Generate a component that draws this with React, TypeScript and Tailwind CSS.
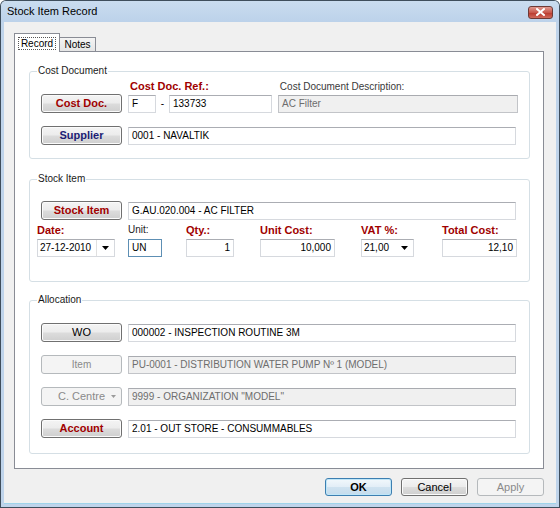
import React from "react";

const RED = "text-[#a00000]";

function Btn({
  children,
  className = "",
  disabled = false,
}: {
  children: React.ReactNode;
  className?: string;
  disabled?: boolean;
}) {
  const base =
    "h-[19px] w-[81px] shrink-0 rounded-[3px] border flex items-center justify-center leading-none";
  const look = disabled
    ? "border-[#b5b9bc] bg-[#f4f4f4] text-[#8a8a8a]"
    : "border-[#707070] bg-[linear-gradient(#f4f4f4,#ececec_48%,#dcdcdc_52%,#cfcfcf)] shadow-[inset_0_0_0_1px_#fbfbfb]";
  return <div className={`${base} ${look} ${className}`}>{children}</div>;
}

function Field({
  children,
  className = "",
  disabled = false,
  right = false,
}: {
  children?: React.ReactNode;
  className?: string;
  disabled?: boolean;
  right?: boolean;
}) {
  const look = disabled
    ? "bg-[#f0f0f0] border-[#c2c4c8] border-t-[#a9abb0] text-[#6d6d6d]"
    : "bg-white border-[#d6d9de] border-t-[#abadb3] text-black";
  return (
    <div
      className={`h-[18px] shrink-0 border flex items-center px-[3px] text-[10px] leading-none whitespace-nowrap overflow-hidden ${
        right ? "justify-end" : ""
      } ${look} ${className}`}
    >
      {children}
    </div>
  );
}

function Arrow({ color = "#000" }: { color?: string }) {
  return (
    <svg width="7" height="4" viewBox="0 0 7 4">
      <path d="M0 0h7L3.5 4z" fill={color} />
    </svg>
  );
}

function Group({
  title,
  className,
  children,
}: {
  title: string;
  className: string;
  children: React.ReactNode;
}) {
  return (
    <div
      className={`relative w-[501px] ml-[14px] rounded-[3px] border border-[#d5dfe5] ${className}`}
    >
      <span className="absolute left-[7px] top-[-7px] bg-white px-[1px] text-[10px] leading-[12px] text-[#1a1a1a]">
        {title}
      </span>
      {children}
    </div>
  );
}

export default function App() {
  return (
    <div className="w-[560px] h-[508px] bg-[#3f4e5c] p-px rounded-t-[6px] font-['Liberation_Sans',Arial,sans-serif] text-black select-none">
      <div className="h-full flex flex-col rounded-t-[5px] bg-[#bfd4eb]">
        {/* Title bar */}
        <div className="h-[21px] shrink-0 flex items-center justify-between pl-[6px] pr-[6px] bg-[linear-gradient(#cadcef,#bcd2ea)] rounded-t-[5px]">
          <span className="text-[11px] leading-none text-black">Stock Item Record</span>
          <div className="w-[25px] h-[13px] mt-[1px] rounded-[3px] border border-[#6e3a36] bg-[linear-gradient(#e09a90,#c8574b_50%,#b9382c_52%,#d06a5c)] flex items-center justify-center">
            <svg width="9" height="8" viewBox="0 0 9 8">
              <path d="M1 1l7 6M8 1L1 7" stroke="#fff" strokeWidth="2" strokeLinecap="square" />
            </svg>
          </div>
        </div>

        {/* Body */}
        <div className="flex-1 mx-[3px] mb-[3px] bg-[#f0f0f0] border-b border-[#9fd3ea] pt-[10px] pl-[10px] flex flex-col">
          {/* Tabs */}
          <div className="flex items-end h-[19px]">
            <div className="relative z-10 h-[19px] -mb-px w-[46px] border border-b-0 border-[#898c95] bg-white flex items-center justify-center">
              <span className="border border-dotted border-[#555] px-[2px] text-[10px] leading-[11px]">
                Record
              </span>
            </div>
            <div className="h-[15px] w-[36px] -mb-px border border-l-0 border-b-0 border-[#898c95] bg-[linear-gradient(#f4f4f4,#e4e4e4)] flex items-center justify-center text-[10px] leading-none">
              Notes
            </div>
          </div>

          {/* Panel */}
          <div className="w-[530px] h-[418px] border border-[#898c95] bg-white pt-[19px] flex flex-col">
            {/* Cost Document */}
            <Group title="Cost Document" className="h-[88px] pt-[8px] pl-[11px]">
              <div className="flex h-[13px] items-center">
                <span className={`ml-[89px] text-[11px] font-bold leading-none ${RED}`}>
                  Cost Doc. Ref.:
                </span>
                <span className="ml-[71px] text-[10px] leading-none text-[#3a3a3a]">
                  Cost Document Description:
                </span>
              </div>
              <div className="flex items-center mt-[1px]">
                <Btn>
                  <span className={`text-[11px] font-bold ${RED}`}>Cost Doc.</span>
                </Btn>
                <Field className="ml-[6px] w-[28px]">F</Field>
                <span className="w-[13px] text-center text-[10px]">-</span>
                <Field className="w-[103px]">133733</Field>
                <Field disabled className="ml-[6px] w-[240px]">
                  AC Filter
                </Field>
              </div>
              <div className="flex items-center mt-[13px]">
                <Btn>
                  <span className="text-[11px] font-bold text-[#1c1c74]">Supplier</span>
                </Btn>
                <Field className="ml-[6px] w-[388px]">0001 - NAVALTIK</Field>
              </div>
            </Group>

            {/* Stock Item */}
            <Group title="Stock Item" className="mt-[20px] h-[103px] pt-[21px] pl-[7px]">
              <div className="flex items-center pl-[4px]">
                <Btn>
                  <span className={`text-[11px] font-bold ${RED}`}>Stock Item</span>
                </Btn>
                <Field className="ml-[6px] w-[388px]">G.AU.020.004 - AC FILTER</Field>
              </div>
              <div className="flex mt-[3px]">
                <div className="w-[78px] flex flex-col">
                  <span className={`h-[16px] text-[11px] font-bold leading-[14px] ${RED}`}>Date:</span>
                  <div className="flex h-[18px] border border-[#d6d9de] border-t-[#abadb3] bg-white">
                    <div className="flex-1 flex items-center pl-[2px] text-[10px] leading-none border-r border-[#e0e0e0]">
                      27-12-2010
                    </div>
                    <div className="w-[17px] flex items-center justify-center">
                      <Arrow />
                    </div>
                  </div>
                </div>
                <div className="ml-[13px] w-[34px] flex flex-col">
                  <span className="h-[16px] text-[10px] leading-[14px] text-[#222]">Unit:</span>
                  <div className="h-[18px] border border-[#5d8fb4] bg-white flex items-center px-[3px] text-[10px] leading-none">
                    UN
                  </div>
                </div>
                <div className="ml-[24px] w-[48px] flex flex-col">
                  <span className={`h-[16px] text-[11px] font-bold leading-[14px] ${RED}`}>Qty.:</span>
                  <Field right className="w-[48px]">1</Field>
                </div>
                <div className="ml-[26px] w-[75px] flex flex-col">
                  <span className={`h-[16px] text-[11px] font-bold leading-[14px] ${RED}`}>Unit Cost:</span>
                  <Field right className="w-[75px]">10,000</Field>
                </div>
                <div className="ml-[26px] w-[53px] flex flex-col">
                  <span className={`h-[16px] text-[11px] font-bold leading-[14px] ${RED}`}>VAT %:</span>
                  <div className="h-[18px] border border-[#d6d9de] border-t-[#abadb3] bg-white flex items-center justify-between pl-[2px] pr-[5px] text-[10px] leading-none">
                    <span>21,00</span>
                    <Arrow />
                  </div>
                </div>
                <div className="ml-[28px] w-[75px] flex flex-col">
                  <span className={`h-[16px] text-[11px] font-bold leading-[14px] ${RED}`}>Total Cost:</span>
                  <Field right className="w-[75px]">12,10</Field>
                </div>
              </div>
            </Group>

            {/* Allocation */}
            <Group title="Allocation" className="mt-[18px] h-[154px] pt-[22px] pl-[11px]">
              <div className="flex flex-col gap-[13px]">
                <div className="flex items-center">
                  <Btn>
                    <span className="text-[11px]">WO</span>
                  </Btn>
                  <Field className="ml-[6px] w-[388px]">000002 - INSPECTION ROUTINE 3M</Field>
                </div>
                <div className="flex items-center">
                  <Btn disabled>
                    <span className="text-[10px]">Item</span>
                  </Btn>
                  <Field disabled className="ml-[6px] w-[388px]">
                    PU-0001 - DISTRIBUTION WATER PUMP Nº 1 (MODEL)
                  </Field>
                </div>
                <div className="flex items-center">
                  <Btn disabled className="relative">
                    <span className="text-[11px]">C. Centre</span>
                    <span className="absolute right-[5px] top-[7px]">
                      <svg width="5" height="3" viewBox="0 0 5 3">
                        <path d="M0 0h5L2.5 3z" fill="#9a9a9a" />
                      </svg>
                    </span>
                  </Btn>
                  <Field disabled className="ml-[6px] w-[388px]">
                    9999 - ORGANIZATION "MODEL"
                  </Field>
                </div>
                <div className="flex items-center">
                  <Btn>
                    <span className={`text-[11px] font-bold ${RED}`}>Account</span>
                  </Btn>
                  <Field className="ml-[6px] w-[388px]">2.01 - OUT STORE - CONSUMMABLES</Field>
                </div>
              </div>
            </Group>
          </div>

          {/* Dialog buttons */}
          <div className="w-[530px] mt-[9px] flex justify-end gap-[9px]">
            <div className="w-[67px] h-[18px] rounded-[3px] border border-[#3c7fb1] bg-[linear-gradient(#f2f8fc,#e3eef7_48%,#cfe2f0_52%,#c4dced)] shadow-[inset_0_0_0_1px_#bfe6f8] flex items-center justify-center text-[11px] font-bold leading-none">
              OK
            </div>
            <div className="w-[67px] h-[18px] rounded-[3px] border border-[#707070] bg-[linear-gradient(#f4f4f4,#ececec_48%,#dcdcdc_52%,#cfcfcf)] shadow-[inset_0_0_0_1px_#fbfbfb] flex items-center justify-center text-[11px] leading-none">
              Cancel
            </div>
            <div className="w-[67px] h-[18px] rounded-[3px] border border-[#b5b9bc] bg-[#f4f4f4] flex items-center justify-center text-[11px] leading-none text-[#8a8a8a]">
              Apply
            </div>
          </div>
        </div>
      </div>
    </div>
  );
}
